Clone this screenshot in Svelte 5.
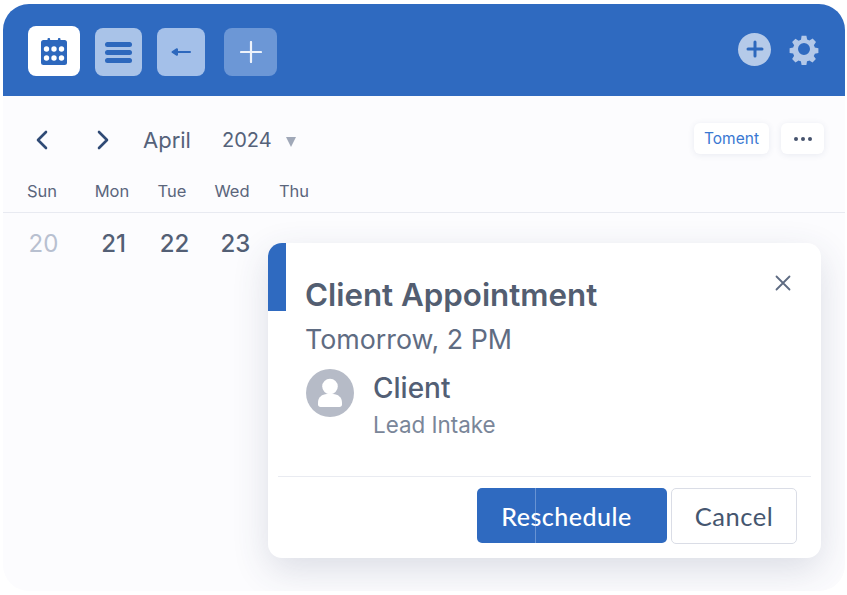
<script>
  let days = ["Sun", "Mon", "Tue", "Wed", "Thu"];
  let dates = [
    { n: 20, muted: true },
    { n: 21 },
    { n: 22 },
    { n: 23 },
  ];
</script>

<div class="page">
  <div class="window">
    <header class="toolbar">
      <button class="tool cal" aria-label="Calendar">
        <svg width="26" height="27" viewBox="0 0 26 27">
          <rect x="6.5" y="0" width="2.6" height="5" rx="1" fill="#2d68bd" />
          <rect x="16.9" y="0" width="2.6" height="5" rx="1" fill="#2d68bd" />
          <rect x="0" y="2" width="26" height="25" rx="2.5" fill="#2d68bd" />
          {#each [5.5, 13, 20.5] as cx}
            <circle {cx} cy="11" r="2.7" fill="#fff" />
            <circle {cx} cy="20" r="2.7" fill="#fff" />
          {/each}
        </svg>
      </button>
      <button class="tool menu" aria-label="Menu">
        <span></span><span></span><span></span>
      </button>
      <button class="tool back" aria-label="Back">
        <svg width="20" height="12" viewBox="0 0 20 12">
          <path d="M1.5 6 L6 3.2 V8.8 Z" fill="#2d68bd" stroke="#2d68bd" stroke-width="2" stroke-linejoin="round" />
          <rect x="5" y="5.1" width="15" height="1.8" rx="0.9" fill="#2d68bd" />
        </svg>
      </button>
      <button class="tool plus" aria-label="Add">
        <svg width="22" height="22" viewBox="0 0 22 22">
          <path d="M11 1 V21 M1 11 H21" stroke="#eef3fb" stroke-width="2.2" stroke-linecap="round" />
        </svg>
      </button>
      <div class="toolbar-right">
        <div class="round-add">
          <svg width="18" height="18" viewBox="0 0 18 18">
            <path d="M9 2 V16 M2 9 H16" stroke="#2d68bd" stroke-width="3" stroke-linecap="round" />
          </svg>
        </div>
        <svg class="gear" width="32" height="32" viewBox="0 0 24 24">
          <path
            fill="#b3c8e8"
            fill-rule="evenodd"
            d="M10 1 h4 l.6 3.1 c.7.2 1.3.5 1.9.9 l2.7-1.7 2.8 2.8 -1.8 2.7 c.4.6.6 1.2.8 1.9 l3 .6 v4 l-3 .6 c-.2.7-.5 1.3-.9 1.9 l1.8 2.6 -2.8 2.8 -2.7-1.7 c-.6.3-1.2.6-1.9.8 l-.5 3.1 h-4 l-.6-3.1 c-.7-.2-1.3-.5-1.9-.8 l-2.6 1.7 -2.8-2.8 1.7-2.7 c-.4-.6-.6-1.2-.8-1.9 l-3-.5 v-4 l3-.6 c.2-.7.5-1.3.8-1.9 l-1.7-2.6 2.8-2.8 2.6 1.7 c.6-.4 1.3-.7 2-.9 z M12 7 a5 5 0 1 0 0 10 a5 5 0 1 0 0-10 z"
            transform="translate(1.2 1.2) scale(0.9)"
          />
        </svg>
      </div>
    </header>

    <div class="nav">
      <svg class="chev" width="14" height="20" viewBox="0 0 14 20">
        <path d="M11 2 L3 10 L11 18" />
      </svg>
      <svg class="chev next" width="14" height="20" viewBox="0 0 14 20">
        <path d="M3 2 L11 10 L3 18" />
      </svg>
      <span class="month">April</span>
      <span class="year">2024</span>
      <span class="caret"></span>
      <div class="nav-right">
        <button class="chip">Toment</button>
        <button class="chip dots" aria-label="More"><i></i><i></i><i></i></button>
      </div>
    </div>

    <div class="weekdays">
      {#each days as d}
        <span>{d}</span>
      {/each}
    </div>

    <div class="dates">
      {#each dates as d}
        <span class:muted={d.muted}>{d.n}</span>
      {/each}
    </div>

    <div class="popover">
      <div class="accent"></div>
      <button class="close" aria-label="Close">
        <svg width="16" height="16" viewBox="0 0 16 16">
          <path d="M1.5 1.5 L14.5 14.5 M14.5 1.5 L1.5 14.5" />
        </svg>
      </button>
      <div class="body">
        <h2>Client Appointment</h2>
        <p class="when">Tomorrow, 2 PM</p>
        <div class="person">
          <div class="avatar">
            <svg width="48" height="48" viewBox="0 0 48 48">
              <circle cx="24" cy="17.5" r="7.8" fill="#fff" />
              <path d="M12 35.5 v-2 c0-5 4-8.5 9-8.5 h6 c5 0 9 3.5 9 8.5 v2 c0 1.5-1 2.5-2.5 2.5 h-19 c-1.5 0-2.5-1-2.5-2.5 z" fill="#fff" />
            </svg>
          </div>
          <div>
            <div class="name">Client</div>
            <div class="role">Lead Intake</div>
          </div>
        </div>
      </div>
      <div class="actions">
        <button class="primary">Reschedule</button>
        <button class="secondary">Cancel</button>
      </div>
    </div>
  </div>
</div>

<style>
  :global(body) {
    margin: 0;
    background: #fff;
  }
  .page {
    width: 847px;
    height: 595px;
    padding: 4px 2px 4px 3px;
    box-sizing: border-box;
    font-family: Inter, "Liberation Sans", sans-serif;
    overflow: hidden;
  }
  .window {
    position: relative;
    height: 100%;
    background: #fcfcfe;
    border-radius: 26px;
    overflow: hidden;
  }
  button {
    font-family: inherit;
    border: 0;
    padding: 0;
  }
  .toolbar {
    height: 92px;
    background: #2f6ac0;
    display: flex;
    align-items: center;
    padding: 4px 25px 0 25px;
    box-sizing: border-box;
  }
  .tool {
    display: flex;
    flex-direction: column;
    align-items: center;
    justify-content: center;
    height: 48px;
    border-radius: 8px;
  }
  .cal {
    width: 52px;
    height: 50px;
    background: #fff;
    margin-right: 15px;
    margin-top: -2px;
  }
  .menu {
    width: 47px;
    background: #a9c3e8;
    gap: 3px;
    margin-right: 15px;
  }
  .menu span {
    width: 27px;
    height: 5px;
    border-radius: 3px;
    background: #2d68bd;
  }
  .back {
    width: 48px;
    background: #a4c0e9;
    margin-right: 19px;
  }
  .plus {
    width: 53px;
    background: #6c97d6;
  }
  .toolbar-right {
    margin-left: auto;
    margin-top: -6px;
    display: flex;
    align-items: center;
    gap: 17px;
  }
  .round-add {
    width: 33px;
    height: 33px;
    border-radius: 50%;
    background: #b5cae9;
    display: flex;
    align-items: center;
    justify-content: center;
  }
  .nav {
    display: flex;
    align-items: center;
    height: 54px;
    margin-top: 17px;
    padding: 0 21px 0 32px;
    color: #55627a;
  }
  .nav > * {
    flex: none;
  }
  .chev path {
    fill: none;
    stroke: #2f4a75;
    stroke-width: 2.6;
    stroke-linecap: round;
    stroke-linejoin: round;
  }
  .next {
    margin-left: 47px;
  }
  .month {
    margin-left: 33px;
    font-size: 22px;
  }
  .year {
    margin-left: 31px;
    font-size: 20px;
  }
  .caret {
    margin-left: 14px;
    margin-top: 3px;
    width: 0;
    height: 0;
    border-left: 5.5px solid transparent;
    border-right: 5.5px solid transparent;
    border-top: 10px solid #a0a8b8;
  }
  .nav-right {
    margin-left: auto;
    display: flex;
    gap: 12px;
    margin-top: -3px;
  }
  .chip {
    height: 31px;
    background: #fff;
    border-radius: 6px;
    box-shadow: 0 1px 6px rgba(60, 80, 130, 0.1);
    color: #3a78d2;
    font-size: 15.5px;
    width: 75px;
  }
  .dots {
    width: 43px;
    display: flex;
    align-items: center;
    justify-content: center;
    gap: 3px;
  }
  .dots i {
    width: 4px;
    height: 4px;
    border-radius: 50%;
    background: #46536d;
  }
  .weekdays {
    display: flex;
    height: 41px;
    padding-top: 4px;
    border-bottom: 1px solid #e8eaf1;
    font-size: 16.5px;
    color: #5b667c;
    line-height: 41px;
  }
  .weekdays span {
    width: 60px;
    text-align: center;
    flex: none;
  }
  .weekdays span:first-child {
    margin-left: 9px;
    margin-right: 10px;
  }
  .weekdays span:last-child {
    margin-left: 2px;
  }
  .dates {
    display: flex;
    margin-top: 15px;
    font-size: 24px;
    font-weight: 500;
    line-height: 32px;
    color: #535f75;
  }
  .dates span {
    width: 61px;
    text-align: center;
    flex: none;
  }
  .dates span:first-child {
    margin-left: 10px;
    margin-right: 9px;
  }
  .dates .muted {
    color: #b8c0d0;
    font-weight: 400;
  }
  .popover {
    position: absolute;
    left: 265px;
    top: 239px;
    width: 553px;
    height: 315px;
    background: #fff;
    border-radius: 14px;
    box-shadow: 0 12px 36px rgba(50, 60, 100, 0.16);
    display: flex;
    flex-direction: column;
  }
  .accent {
    position: absolute;
    left: 0;
    top: 0;
    width: 18px;
    height: 68px;
    background: #2f6ac0;
    border-top-left-radius: 14px;
  }
  .close {
    position: absolute;
    right: 30px;
    top: 32px;
    width: 16px;
    height: 16px;
    background: none;
  }
  .close path {
    fill: none;
    stroke: #5e6b82;
    stroke-width: 1.8;
    stroke-linecap: round;
  }
  .body {
    flex: 1;
    padding: 31px 0 0 37px;
  }
  h2 {
    margin: 0;
    font-size: 31.3px;
    font-weight: 600;
    line-height: 42px;
    color: #535e71;
  }
  .when {
    margin: 6px 0 0;
    font-size: 26.8px;
    line-height: 34px;
    color: #5f6c82;
  }
  .person {
    display: flex;
    gap: 19px;
    margin-top: 12px;
    margin-left: 1px;
  }
  .avatar {
    width: 48px;
    height: 48px;
    border-radius: 50%;
    background: #b6bbc7;
    margin-top: 1px;
  }
  .name {
    margin-top: 1px;
    font-size: 28px;
    font-weight: 500;
    line-height: 38px;
    color: #535f75;
  }
  .role {
    margin-top: 1px;
    font-size: 22.4px;
    line-height: 34px;
    color: #7a8699;
  }
  .actions {
    margin: 0 10px;
    height: 82px;
    border-top: 1px solid #e9ebf1;
    display: flex;
    justify-content: flex-end;
    align-items: center;
    gap: 4px;
    padding-right: 14px;
    padding-bottom: 4px;
    box-sizing: border-box;
  }
  .primary {
    position: relative;
    width: 190px;
    height: 55px;
    padding-right: 11px;
    border-radius: 5px;
    background: #2f6ac0;
    color: #fff;
    font-family: Lato, Inter, sans-serif;
    font-size: 25px;
    font-weight: 500;
    letter-spacing: 0.5px;
  }
  /* faint seam down the button */
  .primary::before {
    content: "";
    position: absolute;
    left: 58px;
    top: 0;
    bottom: 0;
    width: 1px;
    background: rgba(190, 210, 240, 0.4);
  }
  .secondary {
    width: 126px;
    height: 56px;
    box-sizing: border-box;
    border: 1px solid #dadde6;
    border-radius: 5px;
    background: #fff;
    color: #45566f;
    font-family: Lato, Inter, sans-serif;
    font-size: 25.5px;
    letter-spacing: 0.5px;
  }
</style>
